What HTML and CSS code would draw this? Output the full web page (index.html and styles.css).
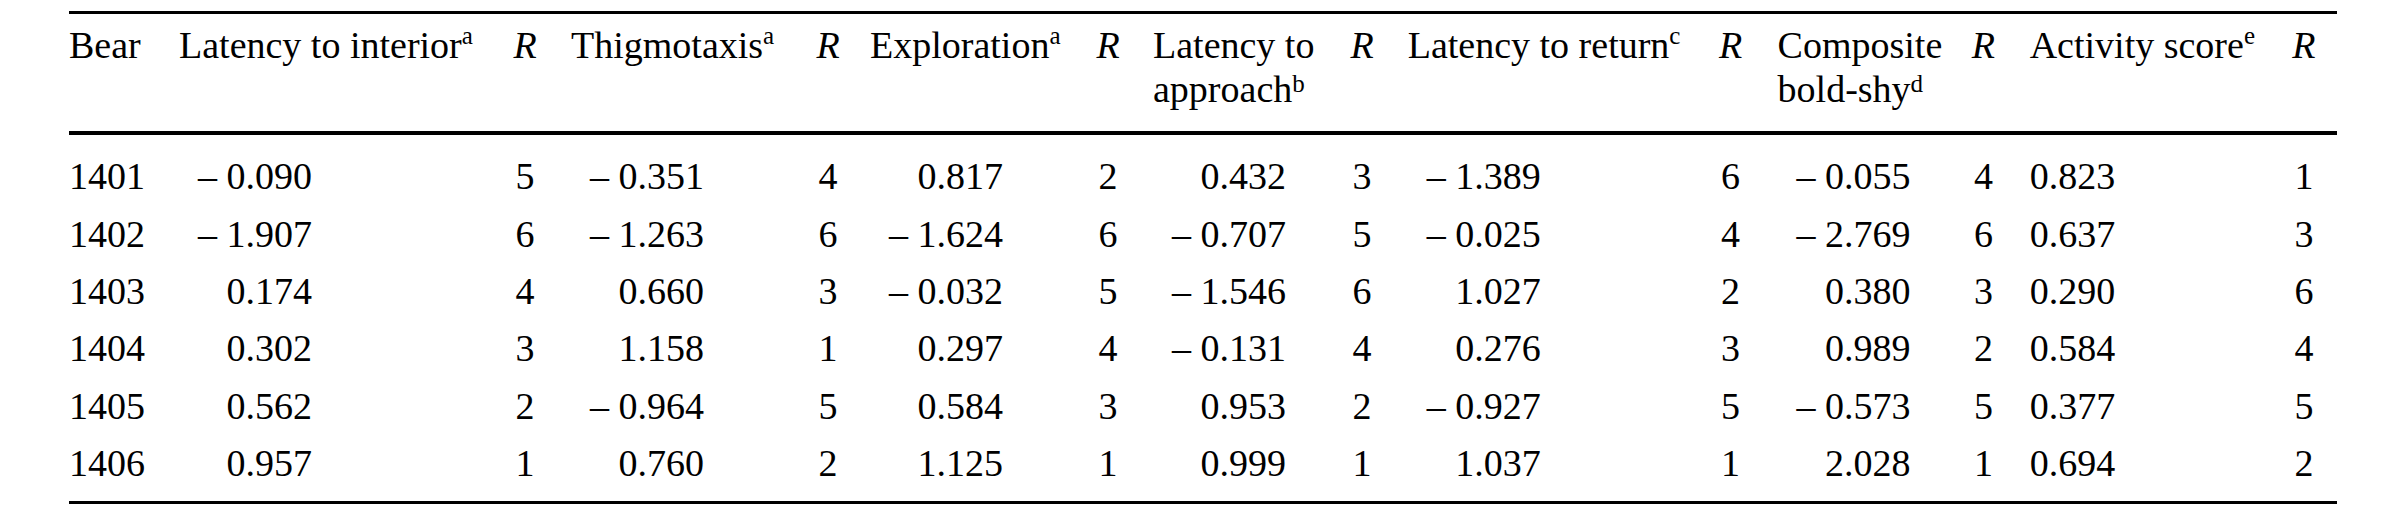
FILE: index.html
```html
<!DOCTYPE html>
<html lang="en">
<head>
<meta charset="utf-8">
<title>Bear behaviour table</title>
<link rel="stylesheet" href="styles.css">
</head>
<body>
<div class="page">
  <div class="tbl">
    <div class="row head">
      <div class="th">Bear</div>
      <div class="th">Latency to interior<sup class="fn">a</sup></div>
      <div class="th r"><span class="rk"><i>R</i></span></div>
      <div class="th">Thigmotaxis<sup class="fn">a</sup></div>
      <div class="th r"><span class="rk"><i>R</i></span></div>
      <div class="th">Exploration<sup class="fn">a</sup></div>
      <div class="th r"><span class="rk"><i>R</i></span></div>
      <div class="th">Latency to approach<sup class="fn asc">b</sup></div>
      <div class="th r"><span class="rk"><i>R</i></span></div>
      <div class="th">Latency to return<sup class="fn">c</sup></div>
      <div class="th r"><span class="rk"><i>R</i></span></div>
      <div class="th">Composite bold-shy<sup class="fn asc">d</sup></div>
      <div class="th r"><span class="rk"><i>R</i></span></div>
      <div class="th">Activity score<sup class="fn">e</sup></div>
      <div class="th r"><span class="rk"><i>R</i></span></div>
    </div>

    <div class="row first">
      <div class="td">1401</div>
      <div class="td"><span class="n">– 0.090</span></div>
      <div class="td r"><span class="rk">5</span></div>
      <div class="td"><span class="n">– 0.351</span></div>
      <div class="td r"><span class="rk">4</span></div>
      <div class="td"><span class="n">0.817</span></div>
      <div class="td r"><span class="rk">2</span></div>
      <div class="td"><span class="n">0.432</span></div>
      <div class="td r"><span class="rk">3</span></div>
      <div class="td"><span class="n">– 1.389</span></div>
      <div class="td r"><span class="rk">6</span></div>
      <div class="td"><span class="n">– 0.055</span></div>
      <div class="td r"><span class="rk">4</span></div>
      <div class="td">0.823</div>
      <div class="td r"><span class="rk">1</span></div>
    </div>

    <div class="row">
      <div class="td">1402</div>
      <div class="td"><span class="n">– 1.907</span></div>
      <div class="td r"><span class="rk">6</span></div>
      <div class="td"><span class="n">– 1.263</span></div>
      <div class="td r"><span class="rk">6</span></div>
      <div class="td"><span class="n">– 1.624</span></div>
      <div class="td r"><span class="rk">6</span></div>
      <div class="td"><span class="n">– 0.707</span></div>
      <div class="td r"><span class="rk">5</span></div>
      <div class="td"><span class="n">– 0.025</span></div>
      <div class="td r"><span class="rk">4</span></div>
      <div class="td"><span class="n">– 2.769</span></div>
      <div class="td r"><span class="rk">6</span></div>
      <div class="td">0.637</div>
      <div class="td r"><span class="rk">3</span></div>
    </div>

    <div class="row">
      <div class="td">1403</div>
      <div class="td"><span class="n">0.174</span></div>
      <div class="td r"><span class="rk">4</span></div>
      <div class="td"><span class="n">0.660</span></div>
      <div class="td r"><span class="rk">3</span></div>
      <div class="td"><span class="n">– 0.032</span></div>
      <div class="td r"><span class="rk">5</span></div>
      <div class="td"><span class="n">– 1.546</span></div>
      <div class="td r"><span class="rk">6</span></div>
      <div class="td"><span class="n">1.027</span></div>
      <div class="td r"><span class="rk">2</span></div>
      <div class="td"><span class="n">0.380</span></div>
      <div class="td r"><span class="rk">3</span></div>
      <div class="td">0.290</div>
      <div class="td r"><span class="rk">6</span></div>
    </div>

    <div class="row">
      <div class="td">1404</div>
      <div class="td"><span class="n">0.302</span></div>
      <div class="td r"><span class="rk">3</span></div>
      <div class="td"><span class="n">1.158</span></div>
      <div class="td r"><span class="rk">1</span></div>
      <div class="td"><span class="n">0.297</span></div>
      <div class="td r"><span class="rk">4</span></div>
      <div class="td"><span class="n">– 0.131</span></div>
      <div class="td r"><span class="rk">4</span></div>
      <div class="td"><span class="n">0.276</span></div>
      <div class="td r"><span class="rk">3</span></div>
      <div class="td"><span class="n">0.989</span></div>
      <div class="td r"><span class="rk">2</span></div>
      <div class="td">0.584</div>
      <div class="td r"><span class="rk">4</span></div>
    </div>

    <div class="row">
      <div class="td">1405</div>
      <div class="td"><span class="n">0.562</span></div>
      <div class="td r"><span class="rk">2</span></div>
      <div class="td"><span class="n">– 0.964</span></div>
      <div class="td r"><span class="rk">5</span></div>
      <div class="td"><span class="n">0.584</span></div>
      <div class="td r"><span class="rk">3</span></div>
      <div class="td"><span class="n">0.953</span></div>
      <div class="td r"><span class="rk">2</span></div>
      <div class="td"><span class="n">– 0.927</span></div>
      <div class="td r"><span class="rk">5</span></div>
      <div class="td"><span class="n">– 0.573</span></div>
      <div class="td r"><span class="rk">5</span></div>
      <div class="td">0.377</div>
      <div class="td r"><span class="rk">5</span></div>
    </div>

    <div class="row last">
      <div class="td">1406</div>
      <div class="td"><span class="n">0.957</span></div>
      <div class="td r"><span class="rk">1</span></div>
      <div class="td"><span class="n">0.760</span></div>
      <div class="td r"><span class="rk">2</span></div>
      <div class="td"><span class="n">1.125</span></div>
      <div class="td r"><span class="rk">1</span></div>
      <div class="td"><span class="n">0.999</span></div>
      <div class="td r"><span class="rk">1</span></div>
      <div class="td"><span class="n">1.037</span></div>
      <div class="td r"><span class="rk">1</span></div>
      <div class="td"><span class="n">2.028</span></div>
      <div class="td r"><span class="rk">1</span></div>
      <div class="td">0.694</div>
      <div class="td r"><span class="rk">2</span></div>
    </div>
  </div>
</div>
</body>
</html>
```

FILE: styles.css
```css
html, body {
  margin: 0;
  padding: 0;
  background: #ffffff;
}

.page {
  padding: 11px 0 0 69px;
  font-family: "Liberation Serif", "Times New Roman", serif;
  font-size: 38px;
  color: #000000;
}

.tbl {
  display: grid;
  width: 2268px;
  grid-template-columns:
    110px 334px 58px 245px 54px 226px 57px 197px
    57.7px 310.8px 59.1px 193.9px 58.2px 262.3px 45px;
}

.row {
  display: contents;
}

.th {
  border-top: 3px solid #000;
  border-bottom: 4px solid #000;
  padding: 9.2px 0 19.8px 0;
  line-height: 44px;
  text-align: left;
  font-weight: normal;
}

.td {
  line-height: 57.3px;
  white-space: nowrap;
}

.first > .td {
  padding-top: 13.5px;
}

.last > .td {
  padding-bottom: 8.7px;
  border-bottom: 3px solid #000;
}

.rk {
  display: inline-block;
  width: 24px;
  text-align: center;
}

.n {
  display: inline-block;
  width: 133px;
  text-align: right;
}

.fn {
  font-size: 25px;
  line-height: 0;
  vertical-align: 14px;
}

.fn.asc {
  vertical-align: 10px;
}
```
